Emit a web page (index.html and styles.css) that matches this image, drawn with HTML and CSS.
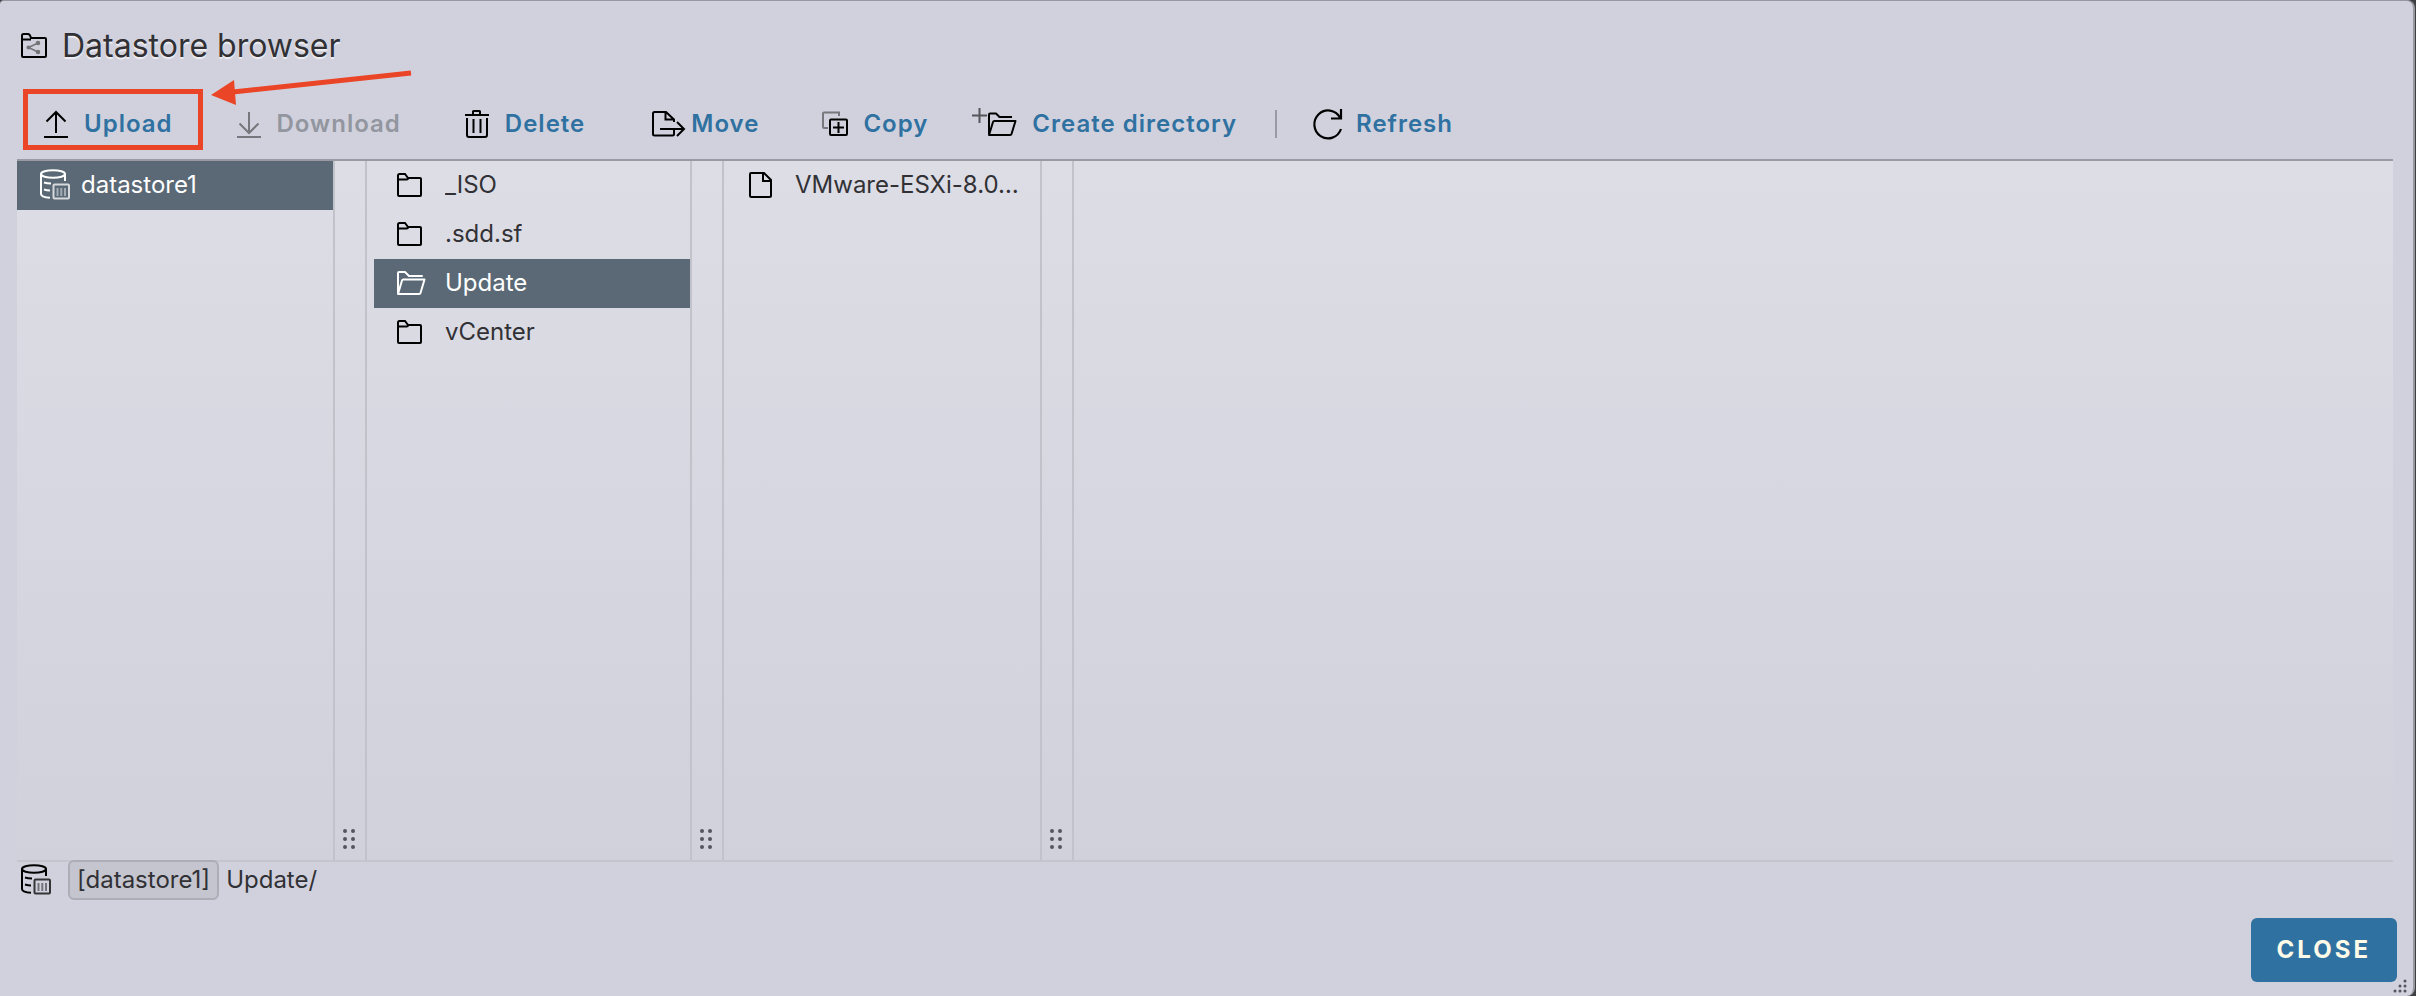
FILE: index.html
```html
<!DOCTYPE html>
<html lang="en">
<head>
<meta charset="utf-8">
<title>Datastore browser</title>
<link rel="stylesheet" href="styles.css">
</head>
<body>
<svg class="sprite" aria-hidden="true">
  <symbol id="folder" viewBox="0 0 30 26"><path d="M2 3.500Q2 2 3.500 2H9l3 4h12q1 0 1 1v16q0 1-1 1H3q-1 0-1-1zM2 7.500H10.500Q12 7.500 12 6" fill="none" stroke="currentColor" stroke-width="2"/></symbol>
  <symbol id="folder-open" viewBox="0 0 30 26"><path d="M2 23V3q0-1 1-1h6l4 4h13M2 24 6 10.500Q6.300 9.500 7.300 9.500H28.500L24.500 23q-.3 1-1.300 1z" fill="none" stroke="currentColor" stroke-width="2" stroke-linejoin="round" stroke-linecap="round"/></symbol>
  <symbol id="file" viewBox="0 0 24 26"><path d="M2 1h13l7 7v15.500q0 1.500-1.500 1.500H2.500Q1 25 1 23.500V2q0-1 1-1zM14 1v8h8" fill="none" stroke="currentColor" stroke-width="2"/></symbol>
  <symbol id="datastore" viewBox="0 0 32 32"><g fill="none" stroke="currentColor" stroke-width="2"><ellipse cx="14" cy="5" rx="12" ry="3.800"/><path d="M2 5v20c0 2.300 4 3.500 9 3.800M26 5v7M5 13.500q3 1 7 1M5 20.500q3 1 6 1"/></g><g class="datastore-meter" fill="none" stroke="currentColor" stroke-width="2"><rect x="14.500" y="15.500" width="15.500" height="14" rx="1"/><path d="M18.500 19v8M22.300 19v8M26 19v8" opacity=".6"/></g></symbol>
</svg>

<main class="dialog">
  <header class="dialog-header">
    <svg class="icon-title" viewBox="0 0 28 26" aria-hidden="true"><path d="M2 2.500Q2 1 3.500 1H8q2 0 3 4h14q1 0 1 1v17q0 1-1 1H3q-1 0-1-1zM2 6.500h9" fill="none" stroke="currentColor" stroke-width="2"/><g stroke="#737378" fill="#737378" stroke-width="1.500"><path d="M18 10 8.500 14.500 18 19" fill="none"/><circle cx="18" cy="10" r="1.500"/><circle cx="8.500" cy="14.500" r="1.300"/><circle cx="18" cy="19" r="1.500"/></g></svg>
    <h1 class="title">Datastore browser</h1>
  </header>

  <div class="toolbar" role="toolbar" aria-label="File actions">
    <button class="tool highlighted"><svg class="icon-tool" viewBox="0 0 26 28" aria-hidden="true"><path d="M13 23V2M3.500 11.500 13 2l9.500 9.500M1 27h24" fill="none" stroke="currentColor" stroke-width="2"/></svg>Upload</button>
    <button class="tool" disabled><svg class="icon-tool" viewBox="0 0 26 28" aria-hidden="true"><path d="M13 2v21M3.500 13.500 13 23l9.500-9.500M1 27h24" fill="none" stroke="currentColor" stroke-width="2"/></svg>Download</button>
    <button class="tool"><svg class="icon-tool" viewBox="0 0 26 28" aria-hidden="true"><path d="M1 5h24M9 4V1.500Q9 1 9.500 1h6q.5 0 .5.500V4M3 8v17q0 2 2 2h16q2 0 2-2V8M9.500 9v14M16.500 9v14" fill="none" stroke="currentColor" stroke-width="2"/></svg>Delete</button>
    <button class="tool tool-move"><svg class="icon-tool wide" viewBox="0 0 34 28" aria-hidden="true"><path d="M22 20v4q0 1.500-1.500 1.500H2.500Q1 25.500 1 24V3.500Q1 2 2.500 2H14l8 7.500V12M13.500 2v7.500H21M8 19h24M25 12l7 7-7 7" fill="none" stroke="currentColor" stroke-width="2"/></svg>Move</button>
    <button class="tool"><svg class="icon-tool" viewBox="0 0 26 28" aria-hidden="true"><path d="M17 6V2.500H2q-1 0-1 1V17q0 1 1 1h4" fill="none" stroke="#77777d" stroke-width="2"/><path d="M9 9.500h15q1 0 1 1V24q0 1-1 1H9q-1 0-1-1V10.500q0-1 1-1zM16.500 12v11M11 17.500h11" fill="none" stroke="currentColor" stroke-width="2"/></svg>Copy</button>
    <button class="tool tool-create"><svg class="icon-tool extra-wide" viewBox="0 0 46 28" aria-hidden="true"><path d="M8.500 -2v15M1 5.500h15" fill="none" stroke="#55555b" stroke-width="2"/><path d="M18 24V4.500q0-1 1-1h6l3.500 3.500H41M18 25 22 12q.3-1 1.300-1H44.500l-4 13q-.3 1-1.300 1z" fill="none" stroke="currentColor" stroke-width="2" stroke-linejoin="round"/></svg>Create directory</button>
    <span class="divider" role="separator"></span>
    <button class="tool tool-refresh"><svg class="icon-tool refresh" viewBox="0 0 30 32" aria-hidden="true"><path d="M28 21A13.700 14 0 1 1 27 9.500M28 1v9.500H18" fill="none" stroke="currentColor" stroke-width="2.200"/></svg>Refresh</button>
    <svg class="arrow" viewBox="0 0 202 36" aria-hidden="true"><path d="M22 22 200 3" stroke="#ea4526" stroke-width="5"/><path d="M0 25 23 10l2 25z" fill="#ea4526"/></svg>
  </div>

  <section class="browser" aria-label="Files">
    <ul class="column">
      <li><button class="entry datastore selected"><svg class="icon-datastore" aria-hidden="true"><use href="#datastore"/></svg><span class="name">datastore1</span></button></li>
    </ul>
    <div class="splitter"><svg class="grip" viewBox="0 0 14 22"><path d="M3 3h.01M11 3h.01M3 11h.01M11 11h.01M3 19h.01M11 19h.01"/></svg></div>
    <ul class="column inset">
      <li><button class="entry"><svg class="icon-entry" aria-hidden="true"><use href="#folder"/></svg><span class="name">_ISO</span></button></li>
      <li><button class="entry"><svg class="icon-entry" aria-hidden="true"><use href="#folder"/></svg><span class="name">.sdd.sf</span></button></li>
      <li><button class="entry selected"><svg class="icon-entry" aria-hidden="true"><use href="#folder-open"/></svg><span class="name">Update</span></button></li>
      <li><button class="entry"><svg class="icon-entry" aria-hidden="true"><use href="#folder"/></svg><span class="name">vCenter</span></button></li>
    </ul>
    <div class="splitter"><svg class="grip" viewBox="0 0 14 22"><path d="M3 3h.01M11 3h.01M3 11h.01M11 11h.01M3 19h.01M11 19h.01"/></svg></div>
    <ul class="column">
      <li><button class="entry"><svg class="icon-entry" aria-hidden="true"><use href="#file"/></svg><span class="name">VMware-ESXi-8.0…</span></button></li>
    </ul>
    <div class="splitter"><svg class="grip" viewBox="0 0 14 22"><path d="M3 3h.01M11 3h.01M3 11h.01M11 11h.01M3 19h.01M11 19h.01"/></svg></div>
  </section>

  <div class="path">
    <svg class="icon-datastore" aria-hidden="true"><use href="#datastore"/></svg>
    <span class="tag">[datastore1]</span>
    <span>Update/</span>
  </div>

  <footer class="dialog-footer"><button class="close">CLOSE</button></footer>
  <svg class="resize" viewBox="0 0 14 14" aria-hidden="true"><path d="M12 2h.01M7 7h.01M12 7h.01M2 12h.01M7 12h.01M12 12h.01"/></svg>
</main>
</body>
</html>
```
FILE: styles.css
```css
* { box-sizing: border-box; }

body {
  margin: 0;
  background: #3d3f43;
  color: #313135;
  font-family: Inter, "Liberation Sans", sans-serif;
  font-size: 24px;
  line-height: 28px;
}

button {
  margin: 0;
  border: 0;
  background: none;
  color: inherit;
  font: inherit;
  cursor: pointer;
}

.sprite { position: absolute; width: 0; height: 0; }

svg { display: block; flex: none; }

.dialog {
  position: relative;
  display: flex;
  flex-direction: column;
  min-height: 100vh;
  margin-right: 1px;
  border-top: 1px solid #97979f;
  border-right: 2px solid #97979f;
  border-radius: 4px 8px 8px 0;
  background: #d1d1dd;
}

.dialog-header {
  display: flex;
  align-items: center;
  gap: 14px;
  height: 78px;
  padding: 11px 20px 0;
}

.icon-title { width: 28px; height: 26px; color: #000; }

.title {
  margin: 0;
  font-size: 32px;
  font-weight: 400;
  line-height: 40px;
  text-shadow: 0 2px 1px #eeeef3;
}

.toolbar {
  position: relative;
  display: flex;
  align-items: center;
  gap: 23px;
  height: 82px;
  margin: 0 20px 0 17px;
  padding: 10px 6px 0;
  border-bottom: 2px solid #9a9aa4;
}

.tool {
  position: relative;
  display: flex;
  align-items: center;
  gap: 15px;
  height: 60px;
  padding: 0 20px;
  color: #2f71a1;
  font-weight: 600;
  letter-spacing: 1px;
}

.tool:disabled { color: #92969f; }

.highlighted::after {
  position: absolute;
  inset: -5px -10px 4px 0;
  border: 5px solid #ea4526;
  content: "";
}

.tool-move { gap: 5px; padding-left: 24px; }
.tool-create { padding-left: 0; padding-right: 15px; }
.tool-refresh { gap: 13px; padding-left: 13px; }

.icon-tool { width: 26px; height: 28px; color: #000; overflow: visible; }
.icon-tool.wide { width: 34px; }
.icon-tool.extra-wide { width: 46px; }
.icon-tool.refresh { width: 30px; height: 32px; }
.tool:disabled .icon-tool { color: #77777d; }

.divider { width: 2px; height: 28px; background: #9a9aa4; }

.arrow { position: absolute; left: 194px; top: -9px; width: 202px; height: 36px; }

.browser {
  display: flex;
  flex: 1;
  margin: 0 20px 0 17px;
  border-bottom: 2px solid #c5c5cd;
  background: linear-gradient(#dddde6, #d1d1dc);
}

.column {
  width: 318px;
  margin: 0;
  padding: 0;
  border-right: 2px solid #c2c2ca;
  list-style: none;
}

.column.inset { width: 325px; padding-left: 7px; }

.splitter {
  display: flex;
  align-items: flex-end;
  justify-content: center;
  width: 32px;
  padding: 0 3px 10px 0;
  border-right: 2px solid #c2c2ca;
}

.grip { width: 14px; height: 22px; }
.grip path, .resize path { stroke: #55555e; stroke-width: 4; stroke-linecap: round; }

.entry {
  display: flex;
  align-items: center;
  gap: 19px;
  width: 100%;
  height: 49px;
  padding: 0 16px 2px 22px;
  text-align: left;
}

.entry.datastore { gap: 10px; }
.entry.selected { background: #5a6975; color: #fff; }
.name { overflow: hidden; text-overflow: ellipsis; white-space: nowrap; }

.icon-entry { width: 30px; height: 26px; color: #000; }
.icon-datastore { width: 32px; height: 32px; color: #000; }
.selected .icon-entry, .selected .icon-datastore { color: #fff; }
.datastore-meter { opacity: .75; }

.path {
  display: flex;
  align-items: center;
  gap: 7px;
  margin: -2px 20px 0;
}

.tag {
  height: 40px;
  margin-left: 9px;
  padding: 4px 7px;
  border: 2px solid #adadb7;
  border-radius: 6px;
  background: #c5c5cf;
}

.dialog-footer {
  display: flex;
  justify-content: flex-end;
  padding: 18px 16px 14px;
}

.close {
  height: 64px;
  padding: 0 26px;
  border-radius: 6px;
  background: #2f71a1;
  color: #fffbe8;
  font-weight: 700;
  letter-spacing: 3px;
}

.resize { position: absolute; right: 6px; bottom: 3px; width: 14px; height: 14px; }
.resize path { stroke-width: 3; }
```
